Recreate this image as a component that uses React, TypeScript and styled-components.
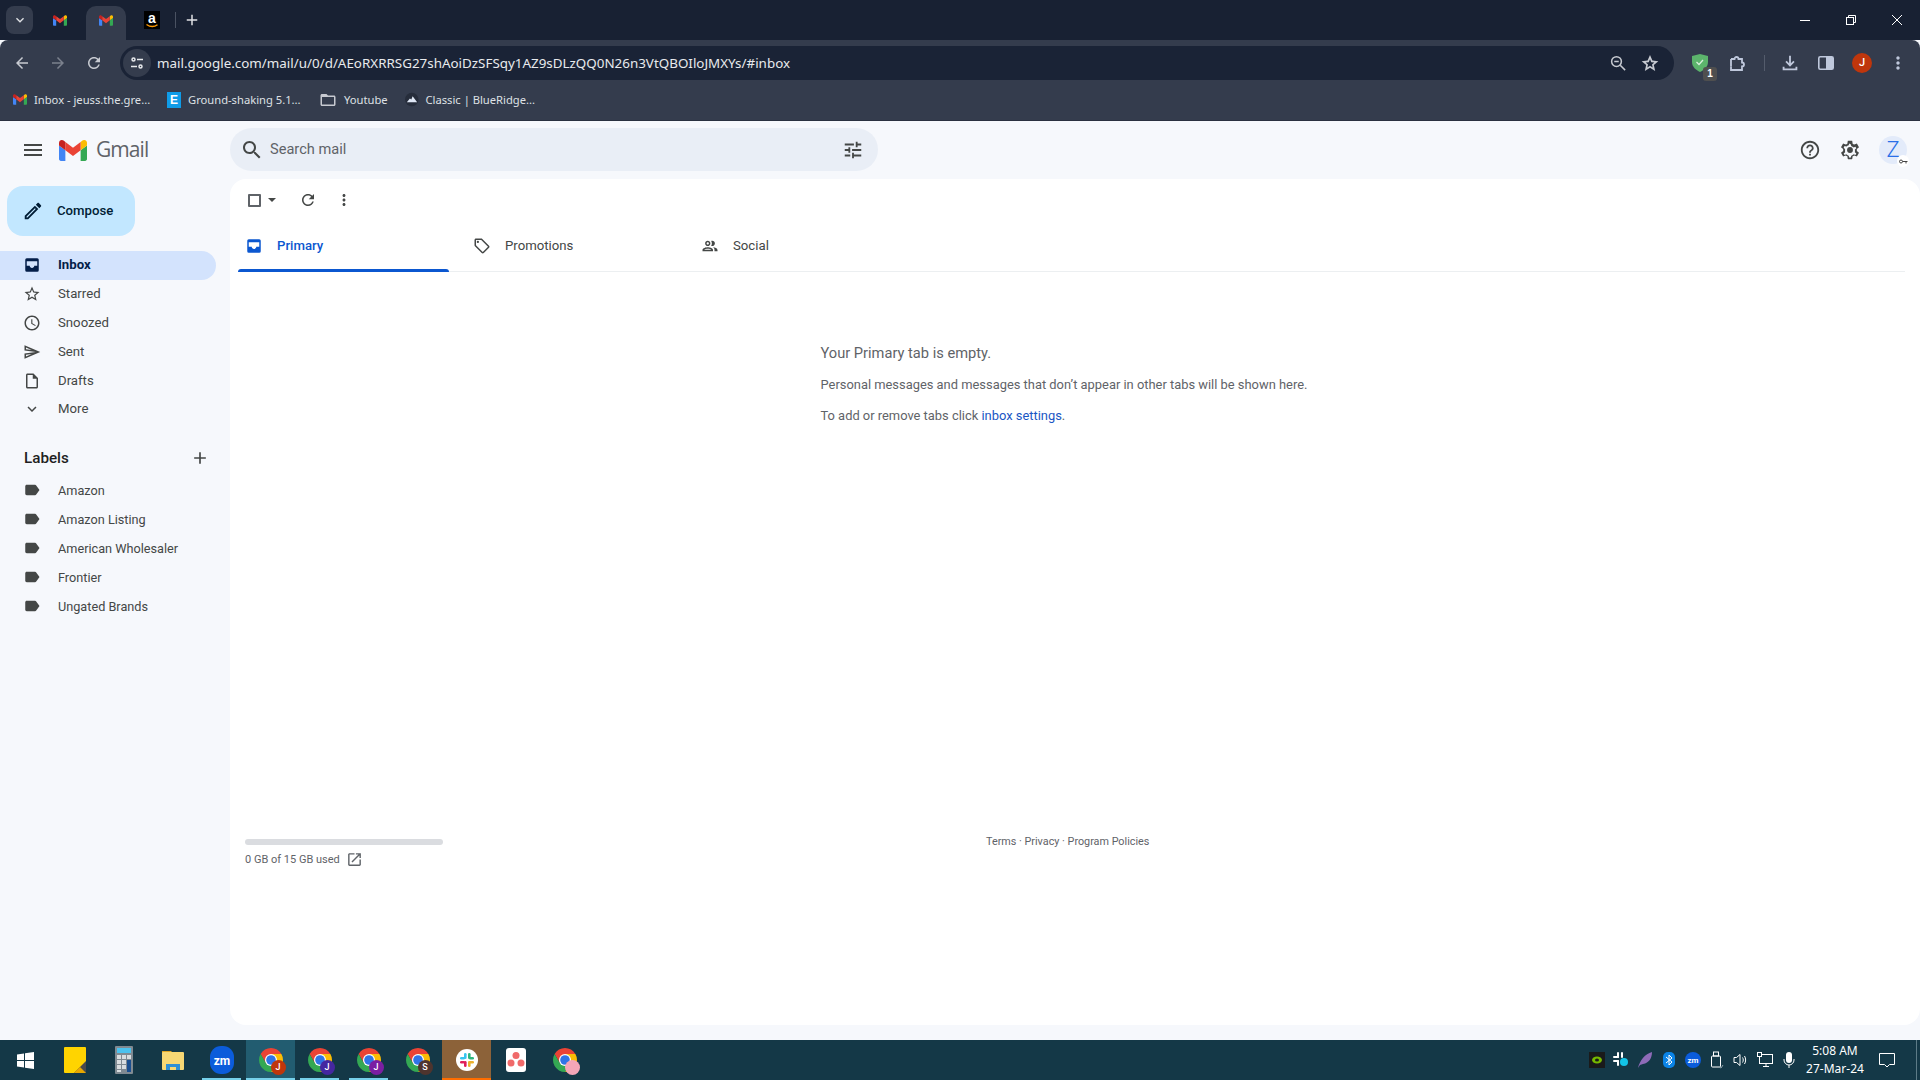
import React from 'react';
import styled, { createGlobalStyle } from 'styled-components';

const Global = createGlobalStyle`
  html, body { margin: 0; padding: 0; width: 1920px; height: 1080px; overflow: hidden; }
  body { font-family: Roboto, "Liberation Sans", sans-serif; background: #f6f8fc; }
  * { box-sizing: border-box; }
`;

const Root = styled.div`display: flex; flex-direction: column; width: 1920px; height: 1080px;`;

/* ---------- browser chrome ---------- */
const TitleBar = styled.div`display: flex; align-items: flex-start; height: 40px; background: #182133; position: relative;`;
const TabList = styled.button`
  width: 27px; height: 28px; margin: 6px 0 0 6px; padding: 0; border: 0; border-radius: 8px;
  background: #343c4d; display: flex; align-items: center; justify-content: center;
`;
const BrowserTab = styled.div<{ $active?: boolean; $w: number }>`
  width: ${p => p.$w}px; height: 34px; margin-top: 6px; display: flex; align-items: center; justify-content: center;
  border-radius: 10px 10px 0 0; padding-bottom: 6px;
  background: ${p => (p.$active ? '#343c4d' : 'transparent')};
`;
const TabSep = styled.div`width: 1px; height: 16px; margin: 12px 7px 0 -3px; background: #4a5262;`;
const PlusWrap = styled.div`height: 40px; display: flex; align-items: center;`;
const WindowButtons = styled.div`margin-left: auto; height: 40px; display: flex; align-items: center;`;
const WinBtn = styled.div`width: 46px; height: 40px; display: flex; align-items: center; justify-content: center;`;
const ChromeBody = styled.div`background: #343c4d; border-radius: 8px 8px 0 0; height: 80px; display: flex; flex-direction: column;`;
const Toolbar = styled.div`height: 40px; display: flex; align-items: center; padding-top: 6px;`;
const NavBtn = styled.div`width: 36px; height: 34px; display: flex; align-items: center; justify-content: center;`;
const NavGroup = styled.div`display: flex; margin-left: 4px; margin-right: 8px;`;
const Omnibox = styled.div`
  width: 1554px; height: 34px; border-radius: 17px; background: #1a2336; display: flex; align-items: center; padding: 0 14px 0 3px;
`;
const SiteInfo = styled.div`width: 28px; height: 28px; border-radius: 50%; background: #343c4d; display: flex; align-items: center; justify-content: center; margin-right: 6px;`;
const Url = styled.div`
  flex: 1; color: #e8eaed; font-family: "Noto Sans", "Open Sans", sans-serif; font-size: 13.4px; white-space: nowrap;
`;
const OmniIcons = styled.div`display: flex; align-items: center; gap: 13px;`;
const ToolIcons = styled.div`display: flex; align-items: center; margin-left: 8px;`;
const ToolIcon = styled.div<{ $w?: number }>`width: ${p => p.$w ?? 36}px; height: 34px; display: flex; align-items: center; justify-content: center; position: relative;`;
const ToolSep = styled.div`width: 1px; height: 16px; background: #545c6c; margin: 0 7px 0 6px;`;
const ShieldBadge = styled.div`
  position: absolute; left: 21px; top: 21px; width: 14px; height: 14px; border-radius: 3px; background: #4f4f4f; color: #fff;
  font: 700 10px/14px "Liberation Sans", sans-serif; text-align: center;
`;
const Avatar = styled.div`width: 20px; height: 20px; border-radius: 50%; background: #bf360c; color: #fff; font: 500 11px/20px Roboto, sans-serif; text-align: center;`;
const Bookmarks = styled.div`height: 40px; display: flex; align-items: center; padding: 0 0 1px 13px;`;
const Bookmark = styled.div<{ $w: number }>`width: ${p => p.$w}px; display: flex; align-items: center; gap: 7px; color: #dfe1e5; font: 400 11.2px "Noto Sans", "Open Sans", sans-serif; white-space: nowrap;`;
const EIcon = styled.div`width: 14px; height: 16px; background: #0f9ce8; color: #fff; font: 700 12px/16px "Liberation Sans", sans-serif; text-align: center;`;
const Rule = styled.div`height: 1px; background: #2a3140;`;

/* ---------- gmail ---------- */
const Gmail = styled.div`flex: 1; min-height: 0; display: flex; flex-direction: column; background: #f6f8fc;`;
const Header = styled.div`height: 58px; display: flex; align-items: center; flex-shrink: 0;`;
const Brand = styled.div`width: 230px; display: flex; align-items: center; padding-left: 21px;`;
const LogoSlot = styled.div`margin-left: 14px; display: flex;`;
const Wordmark = styled.div`font: 400 21px "Open Sans", Roboto, sans-serif; color: #5f6368; margin: 0 0 2px 9px; letter-spacing: -0.95px;`;
const SearchBar = styled.div`
  width: 648px; height: 43px; border-radius: 22px; background: #e9eef6; display: flex; align-items: center; padding: 0 14px 0 10px; margin-bottom: 1px;
`;
const SearchText = styled.div`flex: 1; margin-left: 6px; font: 400 14.6px Roboto, sans-serif; color: #5f6368; padding-bottom: 1px;`;
const HeaderRight = styled.div`margin-left: auto; display: flex; align-items: center; gap: 18px; padding-right: 13px;`;
const AccountAvatar = styled.div`
  width: 28px; height: 28px; border-radius: 50%; background: #e3ebfa; color: #2a6fe8; position: relative;
  font: 300 22px/27px Roboto, sans-serif; text-align: center;
`;
const KeyBadge = styled.div`position: absolute; right: -2px; bottom: -3px; width: 12px; height: 12px; border-radius: 50%; background: #fff; display: flex; align-items: center; justify-content: center;`;

const Body = styled.div`flex: 1; min-height: 0; display: flex;`;
const Sidebar = styled.nav`width: 230px; flex-shrink: 0; padding-top: 7px;`;
const Compose = styled.button`
  width: 128px; height: 50px; margin-left: 7px; border: 0; border-radius: 16px; background: #c2e7ff; display: flex; align-items: center;
  padding: 0 0 0 15px; gap: 13px; font: 500 13.2px Roboto, sans-serif; color: #001d35;
`;
const ComposeLabel = styled.span`margin-bottom: 2px;`;
const NavList = styled.div`margin-top: 15px;`;
const NavRow = styled.div<{ $active?: boolean; $h?: number }>`
  width: 216px; height: ${p => p.$h ?? 29}px; display: flex; align-items: center; padding: 0 0 1px 23px; gap: 17px;
  border-radius: 0 15px 15px 0; background: ${p => (p.$active ? '#d3e3fd' : 'transparent')};
  font: ${p => (p.$active ? 700 : 400)} 13.2px Roboto, sans-serif; color: ${p => (p.$active ? '#041e49' : '#444746')};
`;
const NavText = styled.span`margin-bottom: 2px;`;
const LabelRow = styled(NavRow)`font-size: 12.7px;`;
const LabelHead = styled.div`display: flex; align-items: center; justify-content: space-between; width: 186px; height: 24px; margin: 23px 0 6px 24px; font: 500 15.2px Roboto, sans-serif; color: #1f1f1f;`;

const Panel = styled.main`flex: 1; margin-bottom: 15px; background: #fff; border-radius: 16px; display: flex; flex-direction: column;`;
const Actions = styled.div`height: 42px; display: flex; align-items: center; padding-left: 18px;`;
const CheckBox = styled.div`width: 13px; height: 13px; border: 2px solid #5f6368; border-radius: 1px;`;
const Caret = styled.div`width: 0; height: 0; margin-left: 7px; border: 4px solid transparent; border-top: 4px solid #444746; border-bottom: 0;`;
const ActionIcon = styled.div<{ $gap: number }>`margin-left: ${p => p.$gap}px; display: flex;`;
const Tabs = styled.div`margin: 0 15px 0 8px; height: 51px; display: flex; gap: 17px; border-bottom: 1px solid #eceff1;`;
const Tab = styled.div<{ $active?: boolean }>`
  width: 211px; height: 50px; position: relative; display: flex; align-items: center; gap: 14px; padding: 0 0 1px 7px;
  font: ${p => (p.$active ? 500 : 400)} 13.2px Roboto, sans-serif; color: ${p => (p.$active ? '#0b57d0' : '#444746')};
  &::after {
    content: ''; position: absolute; left: 0; right: 0; bottom: -1px; height: 3px; border-radius: 3px 3px 0 0;
    background: ${p => (p.$active ? '#0b57d0' : 'transparent')};
  }
`;
const Empty = styled.section`margin: 71px 0 0 590.5px; height: 496px; color: #5f6368;`;
const EmptyTitle = styled.div`font: 400 14.65px/20px Roboto, sans-serif;`;
const EmptyLine = styled.div`font: 400 12.9px/16px Roboto, sans-serif; margin-top: 15px;`;
const EmptyFirst = styled(EmptyLine)`margin-top: 14px;`;
const EmptyLink = styled.span`color: #1a56c4;`;
const Footer = styled.div`display: flex; padding-left: 15px; font: 400 11px Roboto, sans-serif; color: #5f6368;`;
const Storage = styled.div`width: 741px;`;
const StorageBar = styled.div`width: 198px; height: 6px; border-radius: 3px; background: #dadce0;`;
const StorageText = styled.div`display: flex; align-items: center; gap: 6px; margin-top: 6px;`;
const Terms = styled.div`font-size: 10.8px; line-height: 6px;`;

/* ---------- taskbar ---------- */
const Taskbar = styled.footer`height: 40px; flex-shrink: 0; display: flex; align-items: center; background: #143847; padding-left: 1px;`;
const TaskItem = styled.div<{ $bg?: string; $line?: string; $inset?: number }>`
  width: 49px; height: 40px; display: flex; align-items: center; justify-content: center; position: relative;
  background: ${p => p.$bg ?? 'transparent'};
  &::after {
    content: ''; position: absolute; bottom: 0; height: 2px; left: ${p => p.$inset ?? 5}px; right: ${p => p.$inset ?? 5}px;
    background: ${p => p.$line ?? 'transparent'};
  }
`;
const Tray = styled.div`margin-left: auto; display: flex; align-items: center; height: 40px;`;
const TrayIcon = styled.div`width: 24px; height: 40px; display: flex; align-items: center; justify-content: center;`;
const Clock = styled.div`width: 68px; text-align: center; color: #fff; font: 400 12px/18.5px "Noto Sans", "Open Sans", sans-serif;`;
const Notify = styled.div`width: 36px; display: flex; justify-content: center;`;
const ShowDesktop = styled.div`width: 1px; height: 40px; background: #5d7b87; margin: 0 3px 0 11px;`;
const ChromeWrap = styled.div`width: 24px; height: 24px; position: relative;`;
const ChromeBadge = styled.div<{ $bg: string }>`
  position: absolute; right: -3px; bottom: -3px; width: 15px; height: 15px; border-radius: 50%; background: ${p => p.$bg}; color: #fff;
  font: 500 9px/15px Roboto, sans-serif; text-align: center;
`;

/* ---------- icons ---------- */
const M = ({ d, s = 20, c = '#444746' }: { d: string; s?: number; c?: string }) => (
  <svg width={s} height={s} viewBox="0 0 24 24" fill={c} style={{ flexShrink: 0 }}><path d={d} /></svg>
);
const P = {
  inbox: 'M19 3H5a2 2 0 0 0-2 2v14a2 2 0 0 0 2 2h14a2 2 0 0 0 2-2V5a2 2 0 0 0-2-2zM5 7h14v6h-4c0 1.66-1.34 3-3 3s-3-1.34-3-3H5z',
  star: 'M22 9.24l-7.19-.62L12 2 9.19 8.63 2 9.24l5.46 4.73L5.82 21 12 17.27 18.18 21l-1.63-7.03L22 9.24zM12 15.4l-3.76 2.27 1-4.28-3.32-2.88 4.38-.38L12 6.1l1.71 4.04 4.38.38-3.32 2.88 1 4.28L12 15.4z',
  clock: 'M11.99 2C6.47 2 2 6.48 2 12s4.47 10 9.99 10C17.52 22 22 17.52 22 12S17.52 2 11.99 2zM12 20c-4.42 0-8-3.58-8-8s3.58-8 8-8 8 3.58 8 8-3.58 8-8 8zm.5-13H11v6l5.25 3.15.75-1.23-4.5-2.67z',
  send: 'M4.01 6.03l7.51 3.22-7.52-1 .01-2.22m7.5 8.72L4 17.97v-2.22l7.51-1M2.01 3L2 10l15 2-15 2 .01 7L23 12 2.01 3z',
  draft: 'M14 2H6c-1.1 0-1.99.9-1.99 2L4 20c0 1.1.89 2 1.99 2H18c1.1 0 2-.9 2-2V8l-6-6zM6 20V4h7v5h5v11H6z',
  more: 'M16.59 8.59L12 13.17 7.41 8.59 6 10l6 6 6-6z',
  label: 'M17.63 5.84C17.27 5.33 16.67 5 16 5L5 5.01C3.9 5.01 3 5.9 3 7v10c0 1.1.9 1.99 2 1.99L16 19c.67 0 1.27-.33 1.63-.84L22 12l-4.37-6.16z',
  menu: 'M3 18h18v-2H3v2zm0-5h18v-2H3v2zm0-7v2h18V6H3z',
  search: 'M15.5 14h-.79l-.28-.27C15.41 12.59 16 11.11 16 9.5 16 5.91 13.09 3 9.5 3S3 5.91 3 9.5 5.91 16 9.5 16c1.61 0 3.09-.59 4.23-1.57l.27.28v.79l5 4.99L20.49 19l-4.99-5zm-6 0C7.01 14 5 11.99 5 9.5S7.01 5 9.5 5 14 7.01 14 9.5 11.99 14 9.5 14z',
  tune: 'M3 17v2h6v-2H3zM3 5v2h10V5H3zm10 16v-2h8v-2h-8v-2h-2v6h2zM7 9v2H3v2h4v2h2V9H7zm14 4v-2H11v2h10zm-6-4h2V7h4V5h-4V3h-2v6z',
  refresh: 'M17.65 6.35C16.2 4.9 14.21 4 12 4c-4.42 0-7.99 3.58-7.99 8s3.57 8 7.99 8c3.73 0 6.84-2.55 7.73-6h-2.08c-.82 2.33-3.04 4-5.65 4-3.31 0-6-2.69-6-6s2.69-6 6-6c1.66 0 3.14.69 4.22 1.78L13 11h7V4l-2.35 2.35z',
  dots: 'M12 8c1.1 0 2-.9 2-2s-.9-2-2-2-2 .9-2 2 .9 2 2 2zm0 2c-1.1 0-2 .9-2 2s.9 2 2 2 2-.9 2-2-.9-2-2-2zm0 6c-1.1 0-2 .9-2 2s.9 2 2 2 2-.9 2-2-.9-2-2-2z',
  help: 'M11 18h2v-2h-2v2zm1-16C6.48 2 2 6.48 2 12s4.48 10 10 10 10-4.48 10-10S17.52 2 12 2zm0 18c-4.41 0-8-3.59-8-8s3.59-8 8-8 8 3.59 8 8-3.59 8-8 8zm0-14c-2.21 0-4 1.79-4 4h2c0-1.1.9-2 2-2s2 .9 2 2c0 2-3 1.75-3 5h2c0-2.25 3-2.5 3-5 0-2.21-1.79-4-4-4z',
  edit: 'M14.06 9.02l.92.92L5.92 19H5v-.92l9.06-9.06M17.66 3c-.25 0-.51.1-.7.29l-1.83 1.83 3.75 3.75 1.83-1.83c.39-.39.39-1.02 0-1.41l-2.34-2.34c-.2-.2-.45-.29-.71-.29zm-3.6 3.19L3 17.25V21h3.75L17.81 9.94l-3.75-3.75z',
  tag: 'M21.41 11.58l-9-9C12.05 2.22 11.55 2 11 2H4c-1.1 0-2 .9-2 2v7c0 .55.22 1.05.59 1.42l9 9c.36.36.86.58 1.41.58.55 0 1.05-.22 1.41-.59l7-7c.37-.36.59-.86.59-1.41 0-.55-.23-1.06-.59-1.42zM13 20.01L4 11V4h7v-.01l9 9-7 7.02zM6.5 5A1.5 1.5 0 1 0 6.5 8 1.5 1.5 0 1 0 6.5 5z',
  people: 'M9 13.75c-2.34 0-7 1.17-7 3.5V19h14v-1.75c0-2.33-4.66-3.5-7-3.5zM4.34 17c.84-.58 2.87-1.25 4.66-1.25s3.82.67 4.66 1.25H4.34zM9 12c1.93 0 3.5-1.57 3.5-3.5S10.93 5 9 5 5.5 6.57 5.5 8.5 7.07 12 9 12zm0-5c.83 0 1.5.67 1.5 1.5S9.83 10 9 10s-1.5-.67-1.5-1.5S8.17 7 9 7zm7.04 6.81c1.16.84 1.96 1.96 1.96 3.44V19h4v-1.75c0-2.02-3.5-3.17-5.96-3.44zM15 12c1.93 0 3.5-1.57 3.5-3.5S16.93 5 15 5c-.54 0-1.04.13-1.5.35.63.89 1 1.98 1 3.15s-.37 2.26-1 3.15c.46.22.96.35 1.5.35z',
  open: 'M19 19H5V5h7V3H5c-1.11 0-2 .9-2 2v14c0 1.1.89 2 2 2h14c1.1 0 2-.9 2-2v-7h-2v7zM14 3v2h3.59l-9.83 9.83 1.41 1.41L19 6.41V10h2V3h-7z',
  add: 'M19 13h-6v6h-2v-6H5v-2h6V5h2v6h6v2z',
  back: 'M20 11H7.83l5.59-5.59L12 4l-8 8 8 8 1.41-1.41L7.83 13H20v-2z',
  fwd: 'M12 4l-1.41 1.41L16.17 11H4v2h12.17l-5.58 5.59L12 20l8-8z',
  folder: 'M20 6h-8l-2-2H4c-1.1 0-1.99.9-1.99 2L2 18c0 1.1.9 2 2 2h16c1.1 0 2-.9 2-2V8c0-1.1-.9-2-2-2zm0 12H4V8h16v10z',
  dl: 'M12 16l-5-5 1.4-1.45L11 12.15V4h2v8.15l2.6-2.6L17 11l-5 5zM4 20v-4h2v2h12v-2h2v4H4z',
  starO: 'M12 2.5l2.9 6.6 7.1.7-5.4 4.7 1.6 7-6.2-3.7-6.2 3.7 1.6-7L2 9.8l7.1-.7L12 2.5zm0 5.1L10.5 11l-3.6.4 2.7 2.4-.8 3.5 3.2-1.9 3.2 1.9-.8-3.5 2.7-2.4-3.6-.4L12 7.6z',
};

const GmailM = ({ w, h }: { w: number; h: number }) => (
  <svg width={w} height={h} viewBox="52 42 88 66" style={{ flexShrink: 0 }}>
    <path fill="#4285f4" d="M58 108h14V74L52 59v43c0 3.32 2.69 6 6 6" />
    <path fill="#34a853" d="M120 108h14c3.32 0 6-2.69 6-6V59l-20 15" />
    <path fill="#fbbc04" d="M120 48v26l20-15v-8c0-7.42-8.47-11.65-14.4-7.2" />
    <path fill="#ea4335" d="M72 74V48l24 18 24-18v26L96 92" />
    <path fill="#c5221f" d="M52 51v8l20 15V48l-5.6-4.2c-5.94-4.45-14.4-.22-14.4 7.2" />
  </svg>
);

const AmazonIcon = () => (
  <svg width="16" height="18" viewBox="0 0 16 18">
    <rect width="16" height="18" fill="#000" />
    <text x="8" y="12" textAnchor="middle" fill="#fff" fontFamily="Liberation Sans" fontWeight="700" fontSize="14">a</text>
    <path d="M2.5 13.5c3.5 2.4 8 2.4 11 .2" stroke="#f90" strokeWidth="1.4" fill="none" />
  </svg>
);

const ChromeLogo = () => (
  <svg width="24" height="24" viewBox="4 4 40 40">
    <path fill="#ea4335" d="M41.32 14A20 20 0 0 0 6.68 14L15.34 29 24 14z" />
    <path fill="#fbbc04" d="M41.32 14A20 20 0 0 1 24 44L32.66 29 24 14z" />
    <path fill="#34a853" d="M24 44A20 20 0 0 1 6.68 14L15.34 29 32.66 29z" />
    <circle cx="24" cy="24" r="10" fill="#fff" />
    <circle cx="24" cy="24" r="8" fill="#2f74e6" />
  </svg>
);

const Gear = () => (
  <svg width="22" height="22" viewBox="0 0 24 24" fill="#444746">
    <path d="M19.43 12.98c.04-.32.07-.64.07-.98s-.03-.66-.07-.98l2.11-1.65c.19-.15.24-.42.12-.64l-2-3.46c-.12-.22-.39-.3-.61-.22l-2.49 1c-.52-.4-1.08-.73-1.69-.98l-.38-2.65C14.46 2.18 14.25 2 14 2h-4c-.25 0-.46.18-.49.42l-.38 2.65c-.61.25-1.17.59-1.69.98l-2.49-1c-.23-.09-.49 0-.61.22l-2 3.46c-.13.22-.07.49.12.64l2.11 1.65c-.04.32-.07.65-.07.98s.03.66.07.98l-2.11 1.65c-.19.15-.24.42-.12.64l2 3.46c.12.22.39.3.61.22l2.49-1c.52.4 1.08.73 1.69.98l.38 2.65c.03.24.24.42.49.42h4c.25 0 .46-.18.49-.42l.38-2.65c.61-.25 1.17-.59 1.69-.98l2.49 1c.23.09.49 0 .61-.22l2-3.46c.12-.22.07-.49-.12-.64l-2.11-1.65z" />
    <path fill="#f6f8fc" d="M12 5.6l1 .1.3 2 .9.4c.4.2.8.4 1.1.7l.7.5 1.9-.8 1 1.7-1.6 1.3.1.9v1.2l-.1.9 1.6 1.3-1 1.7-1.9-.8-.7.5c-.3.3-.7.5-1.1.7l-.9.4-.3 2h-2l-.3-2-.9-.4c-.4-.2-.8-.4-1.1-.7l-.7-.5-1.9.8-1-1.7 1.6-1.3-.1-.9v-1.2l.1-.9L5.100 9.200l1-1.700 1.900.8.7-.5c.3-.3.7-.5 1.100-.7l.9-.4.3-2z" />
    <circle cx="12" cy="12" r="3.2" />
  </svg>
);

const Tile = {
  Win: () => (
    <svg width="17" height="17" viewBox="0 0 17 17" fill="#fff">
      <path d="M0 2.4l7-1v6.600H0zM8 1.300L17 0v8H8zM0 9h7v6.600l-7-1zM8 9h9v8l-9-1.300z" />
    </svg>
  ),
  Sticky: () => (
    <svg width="22" height="26" viewBox="0 0 22 26">
      <rect width="22" height="26" rx="1" fill="#ffd400" />
      <path d="M22 14v12H10z" fill="#4a4a4a" />
      <path d="M22 26H10l6-6z" fill="#e8a800" />
    </svg>
  ),
  Calc: () => (
    <svg width="18" height="28" viewBox="0 0 18 28">
      <rect width="18" height="28" rx="1" fill="#7f8a92" />
      <rect x="2" y="2" width="14" height="5" fill="#4cc2ee" />
      {[9, 14, 19].map(y => [2, 7].map(x => <rect key={`${x}${y}`} x={x} y={y} width="4" height="4" fill="#d9dde0" />))}
      <rect x="12" y="9" width="4" height="4" fill="#d9dde0" />
      <rect x="12" y="14" width="4" height="12" fill="#1b4f8f" />
      <rect x="2" y="24" width="4" height="2" fill="#d9dde0" />
    </svg>
  ),
  Files: () => (
    <svg width="22" height="22" viewBox="0 0 22 22">
      <path d="M0 2h9l2 2H0z" fill="#e0a526" />
      <rect y="3" width="22" height="18" rx="1" fill="#f7d774" />
      <path d="M4 21v-6h14v6h-4v-3H8v3z" fill="#2e8fd6" />
    </svg>
  ),
  Zoom: () => (
    <svg width="24" height="28" viewBox="0 0 24 28">
      <rect width="24" height="28" rx="11" fill="#0b5cdb" />
      <text x="12" y="19" textAnchor="middle" fill="#fff" fontFamily="Roboto" fontWeight="700" fontSize="12">zm</text>
    </svg>
  ),
  Slack: () => (
    <svg width="22" height="22" viewBox="0 0 22 22">
      <circle cx="11" cy="11" r="11" fill="#fff" />
      <rect x="8" y="4" width="2.600" height="6" rx="1.300" fill="#36c5f0" /><rect x="4" y="8" width="5" height="2.600" rx="1.300" fill="#36c5f0" />
      <rect x="12" y="4" width="2.600" height="6" rx="1.300" fill="#2eb67d" /><rect x="13" y="8" width="5" height="2.600" rx="1.300" fill="#2eb67d" />
      <rect x="12" y="12" width="2.600" height="6" rx="1.300" fill="#ecb22e" /><rect x="13" y="12" width="5" height="2.600" rx="1.300" fill="#ecb22e" />
      <rect x="8" y="12" width="2.600" height="6" rx="1.300" fill="#e01e5a" /><rect x="4" y="12" width="5" height="2.600" rx="1.300" fill="#e01e5a" />
    </svg>
  ),
  Asana: () => (
    <svg width="20" height="24" viewBox="0 0 20 24">
      <rect width="20" height="24" rx="3" fill="#fff" />
      <circle cx="10" cy="7.500" r="3.500" fill="#f06a6a" /><circle cx="5" cy="15" r="3.500" fill="#f06a6a" /><circle cx="15" cy="15" r="3.500" fill="#f06a6a" />
    </svg>
  ),
};

const tray = {
  nvidia: <svg width="16" height="16" viewBox="0 0 16 16"><rect width="16" height="16" fill="#1a1a1a" /><ellipse cx="8" cy="8" rx="5" ry="3.500" fill="#76b900" /><ellipse cx="8" cy="8" rx="2" ry="1.500" fill="#1a1a1a" /></svg>,
  slack: <svg width="16" height="16" viewBox="0 0 16 16"><g fill="#fff"><rect x="4" y="0" width="2" height="6" rx="1" /><rect x="0" y="4" width="6" height="2" rx="1" /><rect x="8" y="0" width="2" height="6" rx="1" /><rect x="0" y="8" width="6" height="2" rx="1" /><rect x="4" y="8" width="2" height="6" rx="1" /></g><circle cx="11" cy="10" r="4" fill="#12c4e8" /></svg>,
  feather: <svg width="16" height="18" viewBox="0 0 16 18"><path d="M1 17C3 9 8 3 15 1c0 6-3 11-9 12l-3 1z" fill="#8e6bb8" /></svg>,
  bt: <svg width="12" height="16" viewBox="0 0 12 16"><rect width="12" height="16" rx="5" fill="#0a84e8" /><path d="M3 5l6 5-3 3V3l3 3-6 5" stroke="#fff" fill="none" /></svg>,
  zm: <svg width="16" height="16" viewBox="0 0 16 16"><circle cx="8" cy="8" r="8" fill="#0b5cdb" /><text x="8" y="11" textAnchor="middle" fill="#fff" fontFamily="Roboto" fontWeight="700" fontSize="8">zm</text></svg>,
  usb: <svg width="14" height="18" viewBox="0 0 14 18" fill="none" stroke="#fff"><rect x="3.500" y="1" width="5" height="4" /><rect x="1.500" y="5" width="9" height="11" rx="1" /><path d="M9 16l2 1 2-3" stroke="#8fa3ac" /></svg>,
  sound: <svg width="16" height="14" viewBox="0 0 16 14" fill="none" stroke="#fff"><path d="M1 4.500h2.500L7 1.500v11l-3.500-3H1z" /><path d="M9.500 4.500c1 1.500 1 3.500 0 5M11.500 3c1.500 2.500 1.500 5.500 0 8" /></svg>,
  net: <svg width="16" height="16" viewBox="0 0 16 16" fill="none" stroke="#fff"><rect x="2.500" y="2.500" width="13" height="9" /><path d="M9 11.500v3M6 14.500h6" /><rect x=".5" y=".5" width="4" height="4" fill="#143847" /></svg>,
  mic: <svg width="12" height="16" viewBox="0 0 12 16" fill="#fff"><rect x="3" y="0" width="6" height="11" rx="3" /><path d="M1 7v1a5 5 0 0 0 10 0V7" fill="none" stroke="#fff" /><rect x="5.500" y="13" width="1" height="3" /></svg>,
};

const navItems: [string, string][] = [
  [P.star, 'Starred'], [P.clock, 'Snoozed'], [P.send, 'Sent'], [P.draft, 'Drafts'],
];
const labels = ['Amazon', 'Amazon Listing', 'American Wholesaler', 'Frontier', 'Ungated Brands'];

const taskChromes: [string, string, boolean][] = [
  ['#bf360c', 'J', true], ['#4527a0', 'J', false], ['#7b1fa2', 'J', false], ['#4e342e', 'S', false],
];

const Chrome = ({ bg, t }: { bg: string; t: string }) => (
  <ChromeWrap><ChromeLogo /><ChromeBadge $bg={bg}>{t}</ChromeBadge></ChromeWrap>
);

export default function App() {
  return (
    <Root>
      <Global />
      <TitleBar>
        <TabList><M d={P.more} s={16} c="#dfe1e5" /></TabList>
        <BrowserTab $w={53}><GmailM w={14} h={11} /></BrowserTab>
        <BrowserTab $active $w={40}><GmailM w={14} h={11} /></BrowserTab>
        <BrowserTab $w={52}><AmazonIcon /></BrowserTab>
        <TabSep />
        <PlusWrap><M d={P.add} s={18} c="#dfe1e5" /></PlusWrap>
        <WindowButtons>
          <WinBtn><svg width="10" height="10" viewBox="0 0 10 10"><path d="M0 5.500h10" stroke="#fff" /></svg></WinBtn>
          <WinBtn><svg width="10" height="10" viewBox="0 0 10 10" fill="none" stroke="#fff"><rect x=".5" y="2.500" width="7" height="7" /><path d="M2.500 2.500v-2h7v7h-2" /></svg></WinBtn>
          <WinBtn><svg width="10" height="10" viewBox="0 0 10 10" stroke="#fff"><path d="M0 0l10 10M10 0L0 10" /></svg></WinBtn>
        </WindowButtons>
      </TitleBar>
      <ChromeBody>
        <Toolbar>
          <NavGroup>
            <NavBtn><M d={P.back} s={18} c="#c7cad1" /></NavBtn>
            <NavBtn><M d={P.fwd} s={18} c="#7b818d" /></NavBtn>
            <NavBtn><M d={P.refresh} s={18} c="#c7cad1" /></NavBtn>
          </NavGroup>
          <Omnibox>
            <SiteInfo>
              <svg width="14" height="14" viewBox="0 0 14 14" fill="none" stroke="#e8eaed" strokeWidth="1.500"><circle cx="3.500" cy="3.500" r="1.500" /><path d="M7 3.500h6M1 10.500h6" /><circle cx="10.500" cy="10.500" r="1.500" /></svg>
            </SiteInfo>
            <Url>mail.google.com/mail/u/0/d/AEoRXRRSG27shAoiDzSFSqy1AZ9sDLzQQ0N26n3VtQBOIloJMXYs/#inbox</Url>
            <OmniIcons>
              <svg width="18" height="18" viewBox="0 0 24 24" fill="none" stroke="#c7cad1" strokeWidth="2"><circle cx="10" cy="10" r="6.500" /><path d="M15 15l6.500 6.500M7 10h6" /></svg>
              <M d={P.starO} s={20} c="#c7cad1" />
            </OmniIcons>
          </Omnibox>
          <ToolIcons>
            <ToolIcon>
              <svg width="16" height="18" viewBox="0 0 16 18"><path d="M8 0l8 2v6c0 5-4 8-8 10-4-2-8-5-8-10V2z" fill="#5cb46c" /><path d="M4.500 8l2.500 2.500 4-4.500" fill="none" stroke="#d8efdc" strokeWidth="1.300" /></svg>
              <ShieldBadge>1</ShieldBadge>
            </ToolIcon>
            <ToolIcon $w={40}>
              <svg width="18" height="18" viewBox="0 0 18 18" fill="none" stroke="#bfc8dc" strokeWidth="1.800"><path d="M2 5h3.500a2 2 0 0 1 4 0H13v3.500a2 2 0 0 1 0 4V16H2v-3.500" /><path d="M2 12.500V5" /></svg>
            </ToolIcon>
            <ToolSep />
            <ToolIcon><M d={P.dl} s={22} c="#bfc8dc" /></ToolIcon>
            <ToolIcon>
              <svg width="16" height="14" viewBox="0 0 16 14"><rect x=".8" y=".8" width="14.400" height="12.400" rx="1.500" fill="none" stroke="#bfc8dc" strokeWidth="1.600" /><rect x="8" y="1" width="7" height="12" fill="#bfc8dc" /></svg>
            </ToolIcon>
            <ToolIcon><Avatar>J</Avatar></ToolIcon>
            <ToolIcon><M d={P.dots} s={20} c="#bfc8dc" /></ToolIcon>
          </ToolIcons>
        </Toolbar>
        <Bookmarks>
          <Bookmark $w={154}><GmailM w={14} h={11} />Inbox - jeuss.the.gre...</Bookmark>
          <Bookmark $w={152}><EIcon>E</EIcon>Ground-shaking 5.1...</Bookmark>
          <Bookmark $w={86}><M d={P.folder} s={18} c="#c7cad1" />Youtube</Bookmark>
          <Bookmark $w={130}>
            <svg width="15" height="15" viewBox="0 0 15 15"><circle cx="7.500" cy="7.500" r="7.500" fill="#262d3b" /><path d="M2 10.500l3.500-4 1.500 1 1.500-3.500 5 6.500z" fill="#dfe7f5" /></svg>
            Classic | BlueRidge...
          </Bookmark>
        </Bookmarks>
      </ChromeBody>
      <Rule />
      <Gmail>
        <Header>
          <Brand>
            <M d={P.menu} s={24} c="#444746" />
            <LogoSlot><GmailM w={28} h={21} /></LogoSlot>
            <Wordmark>Gmail</Wordmark>
          </Brand>
          <SearchBar>
            <M d={P.search} s={24} c="#444746" />
            <SearchText>Search mail</SearchText>
            <M d={P.tune} s={22} c="#444746" />
          </SearchBar>
          <HeaderRight>
            <M d={P.help} s={22} c="#444746" />
            <Gear />
            <AccountAvatar>Z<KeyBadge><svg width="9" height="5" viewBox="0 0 9 5" fill="none" stroke="#444"><circle cx="2" cy="2.500" r="1.500" /><path d="M3.500 2.500h5M7 2.500v2" /></svg></KeyBadge></AccountAvatar>
          </HeaderRight>
        </Header>
        <Body>
          <Sidebar>
            <Compose><M d={P.edit} s={22} c="#001d35" /><ComposeLabel>Compose</ComposeLabel></Compose>
            <NavList>
              <NavRow $active><M d={P.inbox} s={18} c="#041e49" /><NavText>Inbox</NavText></NavRow>
              {navItems.map(([d, t]) => (
                <NavRow key={t}><M d={d} s={18} /><NavText>{t}</NavText></NavRow>
              ))}
              <NavRow $h={27}><M d={P.more} s={18} /><NavText>More</NavText></NavRow>
            </NavList>
            <LabelHead>Labels<M d={P.add} s={20} /></LabelHead>
            {labels.map(l => (
              <LabelRow key={l}><M d={P.label} s={18} />{l}</LabelRow>
            ))}
          </Sidebar>
          <Panel>
            <Actions>
              <CheckBox />
              <Caret />
              <ActionIcon $gap={23}><M d={P.refresh} s={18} /></ActionIcon>
              <ActionIcon $gap={18}><M d={P.dots} s={18} /></ActionIcon>
            </Actions>
            <Tabs>
              <Tab $active><M d={P.inbox} s={18} c="#0b57d0" />Primary</Tab>
              <Tab><M d={P.tag} s={18} />Promotions</Tab>
              <Tab><M d={P.people} s={18} />Social</Tab>
            </Tabs>
            <Empty>
              <EmptyTitle>Your Primary tab is empty.</EmptyTitle>
              <EmptyFirst>Personal messages and messages that don’t appear in other tabs will be shown here.</EmptyFirst>
              <EmptyLine>To add or remove tabs click <EmptyLink>inbox settings</EmptyLink>.</EmptyLine>
            </Empty>
            <Footer>
              <Storage>
                <StorageBar />
                <StorageText>0 GB of 15 GB used <M d={P.open} s={17} c="#5f6368" /></StorageText>
              </Storage>
              <Terms>Terms · Privacy · Program Policies</Terms>
            </Footer>
          </Panel>
        </Body>
      </Gmail>
      <Taskbar>
        <TaskItem><Tile.Win /></TaskItem>
        <TaskItem><Tile.Sticky /></TaskItem>
        <TaskItem><Tile.Calc /></TaskItem>
        <TaskItem><Tile.Files /></TaskItem>
        <TaskItem $line="#76d0ea"><Tile.Zoom /></TaskItem>
        {taskChromes.map(([bg, t, on], i) => (
          <TaskItem key={i} $bg={on ? '#225c70' : undefined} $line={i < 3 ? '#76d0ea' : undefined} $inset={on ? 0 : 5}>
            <Chrome bg={bg} t={t} />
          </TaskItem>
        ))}
        <TaskItem $bg="#8c6239" $line="#ff6d00" $inset={0}><Tile.Slack /></TaskItem>
        <TaskItem><Tile.Asana /></TaskItem>
        <TaskItem><Chrome bg="#f4a6b8" t="" /></TaskItem>
        <Tray>
          <TrayIcon>{tray.nvidia}</TrayIcon>
          <TrayIcon>{tray.slack}</TrayIcon>
          <TrayIcon>{tray.feather}</TrayIcon>
          <TrayIcon>{tray.bt}</TrayIcon>
          <TrayIcon>{tray.zm}</TrayIcon>
          <TrayIcon>{tray.usb}</TrayIcon>
          <TrayIcon>{tray.sound}</TrayIcon>
          <TrayIcon>{tray.net}</TrayIcon>
          <TrayIcon>{tray.mic}</TrayIcon>
          <Clock>5:08 AM<br />27-Mar-24</Clock>
          <Notify>
            <svg width="16" height="16" viewBox="0 0 16 16" fill="none" stroke="#fff"><path d="M.5 1.500h15v11h-5l-2.500 2.500-2.500-2.500h-5z" /></svg>
          </Notify>
          <ShowDesktop />
        </Tray>
      </Taskbar>
    </Root>
  );
}
